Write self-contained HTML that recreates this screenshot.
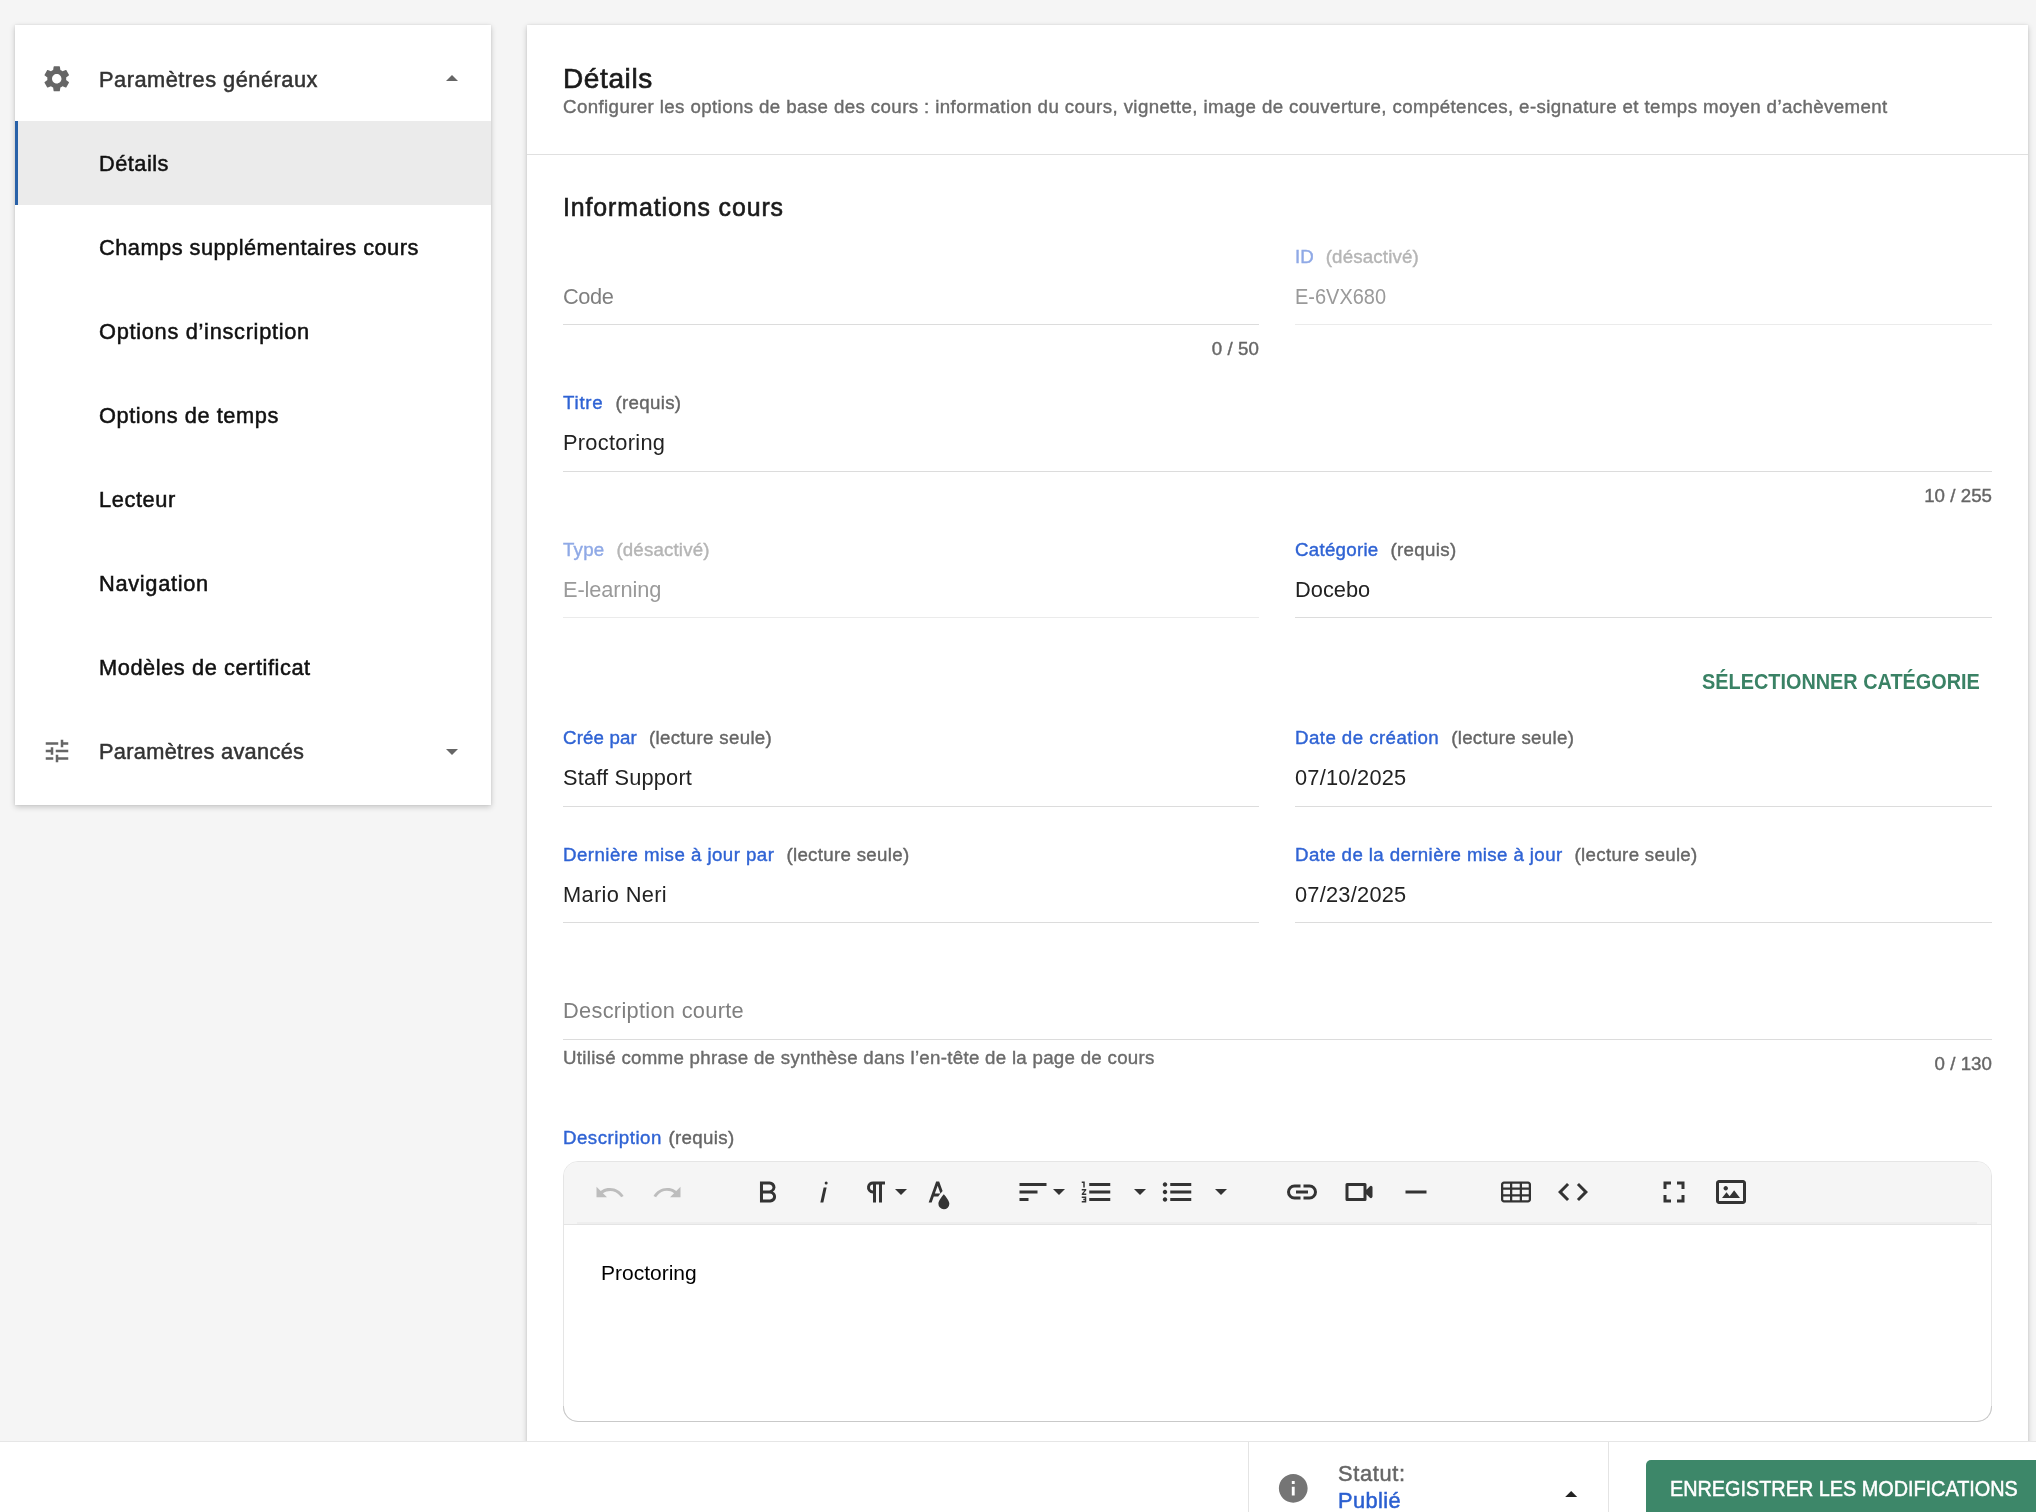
<!DOCTYPE html>
<html lang="fr">
<head>
<meta charset="utf-8">
<title>Détails</title>
<style>
:root{--ff:"Liberation Sans",sans-serif;}
*{box-sizing:border-box;margin:0;padding:0;}
html,body{width:2036px;height:1512px;overflow:hidden;background:#f5f5f5;}
body{position:relative;will-change:transform;font-family:var(--ff);color:#1a1a1a;-webkit-font-smoothing:antialiased;}
.abs{position:absolute;}
.t{position:absolute;white-space:pre;line-height:1;}
.sb{font-weight:600;}
/* sidebar */
#side{position:absolute;left:15px;top:25px;width:476px;height:780px;background:#fff;box-shadow:0 2px 6px rgba(0,0,0,.2),0 0 2px rgba(0,0,0,.08);}
#side .act{position:absolute;left:0;top:96px;width:476px;height:84px;background:#ebebeb;border-left:3px solid #2861a8;}
#side .it{position:absolute;left:84px;font-size:21px;font-weight:600;color:#111;white-space:pre;line-height:24px;}
#side .hd{color:#333;}
/* main */
#main{position:absolute;left:527px;top:25px;width:1501px;height:1500px;background:#fff;box-shadow:0 2px 6px rgba(0,0,0,.2),0 0 2px rgba(0,0,0,.08);}
.hr{position:absolute;height:1px;background:#dcdcdc;}
.lbl{font-size:18px;font-weight:600;color:#2f63d4;}
.lbl i{font-style:normal;color:#666;}
.lbl i.g{margin-left:12px;}
.lbl.dis{color:#8fa9e6;}
.lbl.dis i{color:#b5b5b5;}
.val{font-size:21px;color:#222;}
.ph{font-size:21px;color:#7f7f7f;}
.ph.d{color:#9a9a9a;}
.cnt{font-size:18px;font-weight:600;color:#666;}
#ed{position:absolute;left:36px;top:1136px;width:1429px;height:261px;border:1px solid #e5e5e5;border-radius:15px;background:#fff;}
#edb{position:absolute;left:-1px;bottom:-1px;width:1429px;height:16px;border:1px solid #c9c9c9;border-top:none;border-radius:0 0 15px 15px;}
#tb{position:absolute;left:0;top:0;width:100%;height:63px;background:#f5f5f5;border-bottom:1px solid #e4e4e4;border-radius:14px 14px 0 0;}
#tbl{position:absolute;left:13px;right:14px;top:60px;height:2px;background:#eeeeee;}
.hr.lt{background:#ebebeb;}
#title{font-size:27px;color:#1a1a1a;}
#sub{font-size:18px;color:#6b6b6b;}
#info{font-size:24px;color:#1a1a1a;}
#selcat{font-size:21px;font-weight:700;color:#3a8265;}
.f21{font-size:21px;}
/*PROXYOFF*/
#side .it{font-size:21.8px;font-weight:400;-webkit-text-stroke:.5px currentColor;}
.sb,.lbl,.cnt{font-weight:400;-webkit-text-stroke:.4px currentColor;}
#title{font-size:28px;-webkit-text-stroke:.65px currentColor;}
#sub{font-size:18.7px;}
#info{font-size:24.9px;-webkit-text-stroke:.6px currentColor;}
.lbl,.cnt{font-size:18.7px;}
.val,.ph,.f21,#selcat{font-size:21.8px;}
.f21{-webkit-text-stroke:.5px currentColor;}
#side .it span,#title span,#sub span,#info span,.lbl span,.lbl i,.cnt span{position:relative;top:1px;}
/*ENDPROXYOFF*/
/*FIT*/
#x1{letter-spacing:0.492px}
#x2{letter-spacing:0.469px}
#x3{letter-spacing:0.475px}
#x4{letter-spacing:0.696px}
#x5{letter-spacing:0.570px}
#x6{letter-spacing:0.580px}
#x7{letter-spacing:0.684px}
#x8{letter-spacing:0.563px}
#x9{letter-spacing:0.299px}
#x10{letter-spacing:0.614px}
#x11{letter-spacing:0.395px}
#x12{letter-spacing:0.899px}
#x13{letter-spacing:-0.398px}
#x14{letter-spacing:0.081px}
#x15{letter-spacing:0.000px}
#x16{letter-spacing:0.169px}
#x17{display:inline-block;transform:scaleX(0.9168);transform-origin:0 50%}
#x18{letter-spacing:0.753px}
#x19{letter-spacing:0.328px}
#x20{letter-spacing:0.286px}
#x21{letter-spacing:0.037px}
#x22{letter-spacing:0.219px}
#x23{letter-spacing:0.169px}
#x24{letter-spacing:-0.113px}
#x25{letter-spacing:0.271px}
#x26{letter-spacing:0.328px}
#x27{letter-spacing:0.010px}
#x28{display:inline-block;transform:scaleX(0.9111);transform-origin:100% 50%}
#x29{letter-spacing:0.162px}
#x30{letter-spacing:0.311px}
#x31{letter-spacing:0.169px}
#x32{letter-spacing:0.438px}
#x33{letter-spacing:0.311px}
#x34{letter-spacing:0.237px}
#x35{letter-spacing:0.456px}
#x36{letter-spacing:0.311px}
#x37{letter-spacing:0.348px}
#x38{letter-spacing:0.387px}
#x39{letter-spacing:0.311px}
#x40{letter-spacing:0.237px}
#x41{letter-spacing:0.297px}
#x42{letter-spacing:0.288px}
#x43{letter-spacing:0.056px}
#x44{letter-spacing:0.486px}
#x45{letter-spacing:0.328px}
#x47{letter-spacing:0.676px}
#x48{letter-spacing:0.424px}
#x49{display:inline-block;transform:scaleX(0.9097);transform-origin:0 50%}
/*ENDFIT*/
/* footer */
#foot{position:absolute;left:0;top:1441px;width:2036px;height:71px;background:#fff;border-top:1px solid #e6e6e6;}
</style>
</head>
<body>

<div id="side">
  <div class="act"></div>
  <svg class="abs" style="left:25.95px;top:38.25px" width="31.5" height="31.5" viewBox="0 0 24 24" fill="#666"><path d="M19.14,12.94c0.04-0.3,0.06-0.61,0.06-0.94c0-0.32-0.02-0.64-0.07-0.94l2.03-1.58c0.18-0.14,0.23-0.41,0.12-0.61l-1.92-3.32c-0.12-0.22-0.37-0.29-0.59-0.22l-2.39,0.96c-0.5-0.38-1.03-0.7-1.62-0.94L14.4,2.81c-0.04-0.24-0.24-0.41-0.48-0.41h-3.84c-0.24,0-0.43,0.17-0.47,0.41L9.25,5.35C8.66,5.59,8.12,5.92,7.63,6.29L5.24,5.33c-0.22-0.08-0.47,0-0.59,0.22L2.74,8.87C2.62,9.08,2.66,9.34,2.86,9.48l2.03,1.58C4.84,11.36,4.8,11.69,4.8,12s0.02,0.64,0.07,0.94l-2.03,1.58c-0.18,0.14-0.23,0.41-0.12,0.61l1.92,3.32c0.12,0.22,0.37,0.29,0.59,0.22l2.39-0.96c0.5,0.38,1.03,0.7,1.62,0.94l0.36,2.54c0.05,0.24,0.24,0.41,0.48,0.41h3.84c0.24,0,0.44-0.17,0.47-0.41l0.36-2.54c0.59-0.24,1.13-0.56,1.62-0.94l2.39,0.96c0.22,0.08,0.47,0,0.59-0.22l1.92-3.32c0.12-0.22,0.07-0.47-0.12-0.61L19.14,12.94z M12,15.6c-1.98,0-3.6-1.62-3.6-3.6s1.62-3.6,3.6-3.6s3.6,1.62,3.6,3.6S13.98,15.6,12,15.6z"/></svg>
  <svg class="abs" style="left:27px;top:711px" width="30" height="30" viewBox="0 0 24 24" fill="#666"><path d="M3 17v2h6v-2H3zM3 5v2h10V5H3zm10 16v-2h8v-2h-8v-2h-2v6h2zM7 9v2H3v2h4v2h2V9H7zm14 4v-2H11v2h10zm-6-4h2V7h4V5h-4V3h-2v6z"/></svg>
  <svg class="abs" style="left:431px;top:49.8px" width="12" height="6" viewBox="0 0 12 6" fill="#666"><path d="M0 6L6 0l6 6z"/></svg>
  <svg class="abs" style="left:431px;top:723.9px" width="12" height="6" viewBox="0 0 12 6" fill="#666"><path d="M0 0l6 6 6-6z"/></svg>
  <div class="it hd" style="top:42px"><span id="x1">Paramètres généraux</span></div>
  <div class="it" style="top:126px"><span id="x2">Détails</span></div>
  <div class="it" style="top:210px"><span id="x3">Champs supplémentaires cours</span></div>
  <div class="it" style="top:294px"><span id="x4">Options d’inscription</span></div>
  <div class="it" style="top:378px"><span id="x5">Options de temps</span></div>
  <div class="it" style="top:462px"><span id="x6">Lecteur</span></div>
  <div class="it" style="top:546px"><span id="x7">Navigation</span></div>
  <div class="it" style="top:630px"><span id="x8">Modèles de certificat</span></div>
  <div class="it hd" style="top:714px"><span id="x9">Paramètres avancés</span></div>
</div>

<div id="main">
  <div class="t sb" id="title" style="left:36px;top:39px;"><span id="x10">Détails</span></div>
  <div class="t sb" id="sub" style="left:36px;top:72px;"><span id="x11">Configurer les options de base des cours : information du cours, vignette, image de couverture, compétences, e-signature et temps moyen d’achèvement</span></div>
  <div class="hr" style="left:0;top:129px;width:1501px;height:1px;background:#e0e0e0;"></div>

  <div class="t sb" id="info" style="left:36px;top:169px;"><span id="x12">Informations cours</span></div>

  <!-- row 1 -->
  <div class="t ph" style="left:36px;top:261px;"><span id="x13">Code</span></div>
  <div class="hr" style="left:36px;top:299px;width:696px;"></div>
  <div class="t cnt r" style="right:769px;top:314px;"><span id="x14">0 / 50</span></div>

  <div class="t lbl dis" style="left:768px;top:222px;"><span id="x15">ID</span><i class="g" id="x16">(désactivé)</i></div>
  <div class="t ph d" style="left:768px;top:261px;"><span id="x17">E-6VX680</span></div>
  <div class="hr lt" style="left:768px;top:299px;width:697px;"></div>

  <!-- row 2 -->
  <div class="t lbl" style="left:36px;top:368px;"><span id="x18">Titre</span><i class="g" id="x19">(requis)</i></div>
  <div class="t val" style="left:36px;top:407px;"><span id="x20">Proctoring</span></div>
  <div class="hr" style="left:36px;top:446px;width:1429px;"></div>
  <div class="t cnt r" style="right:36px;top:461px;"><span id="x21">10 / 255</span></div>

  <!-- row 3 -->
  <div class="t lbl dis" style="left:36px;top:515px;"><span id="x22">Type</span><i class="g" id="x23">(désactivé)</i></div>
  <div class="t ph d" style="left:36px;top:554px;"><span id="x24">E-learning</span></div>
  <div class="hr lt" style="left:36px;top:592px;width:696px;"></div>

  <div class="t lbl" style="left:768px;top:515px;"><span id="x25">Catégorie</span><i class="g" id="x26">(requis)</i></div>
  <div class="t val" style="left:768px;top:554px;"><span id="x27">Docebo</span></div>
  <div class="hr" style="left:768px;top:592px;width:697px;"></div>

  <div class="t" id="selcat" style="right:48px;top:646px;"><span id="x28">SÉLECTIONNER CATÉGORIE</span></div>

  <!-- row 4 -->
  <div class="t lbl" style="left:36px;top:703px;"><span id="x29">Crée par</span><i class="g" id="x30">(lecture seule)</i></div>
  <div class="t val" style="left:36px;top:742px;"><span id="x31">Staff Support</span></div>
  <div class="hr" style="left:36px;top:781px;width:696px;"></div>

  <div class="t lbl" style="left:768px;top:703px;"><span id="x32">Date de création</span><i class="g" id="x33">(lecture seule)</i></div>
  <div class="t val" style="left:768px;top:742px;"><span id="x34">07/10/2025</span></div>
  <div class="hr" style="left:768px;top:781px;width:697px;"></div>

  <!-- row 5 -->
  <div class="t lbl" style="left:36px;top:820px;"><span id="x35">Dernière mise à jour par</span><i class="g" id="x36">(lecture seule)</i></div>
  <div class="t val" style="left:36px;top:859px;"><span id="x37">Mario Neri</span></div>
  <div class="hr" style="left:36px;top:897px;width:696px;"></div>

  <div class="t lbl" style="left:768px;top:820px;"><span id="x38">Date de la dernière mise à jour</span><i class="g" id="x39">(lecture seule)</i></div>
  <div class="t val" style="left:768px;top:859px;"><span id="x40">07/23/2025</span></div>
  <div class="hr" style="left:768px;top:897px;width:697px;"></div>

  <!-- short description -->
  <div class="t ph" style="left:36px;top:975px;"><span id="x41">Description courte</span></div>
  <div class="hr" style="left:36px;top:1014px;width:1429px;"></div>
  <div class="t cnt" style="left:36px;top:1023px;color:#6b6b6b;"><span id="x42">Utilisé comme phrase de synthèse dans l’en-tête de la page de cours</span></div>
  <div class="t cnt r" style="right:36px;top:1029px;"><span id="x43">0 / 130</span></div>

  <!-- description -->
  <div class="t lbl" style="left:36px;top:1103px;"><span id="x44">Description </span><i id="x45" style="margin-left:1px">(requis)</i></div>
  <div id="ed">
    <div id="edb"></div>
    <div id="tb"><div id="tbl"></div>
      <svg class="abs" style="left:27.5px;top:12px" width="36" height="36" viewBox="0 0 24 24" fill="#bdbdbd"><path d="M10.4,9.4c-1.7,0.3-3.2,0.9-4.6,2L3,8.5v7h7l-2.7-2.7c3.7-2.6,8.8-1.8,11.5,1.900c0.2,0.3,0.4,0.5,0.5,0.8l1.8-0.9C18.9,10.8,14.7,8.7,10.4,9.4z"/></svg>
      <svg class="abs" style="left:85.2px;top:12px" width="36" height="36" viewBox="0 0 24 24" fill="#bdbdbd"><path d="M13.6,9.4c1.7,0.3,3.2,0.9,4.6,2L21,8.5v7h-7l2.7-2.7C13,10.1,7.9,11,5.3,14.7c-0.2,0.3-0.4,0.5-0.5,0.8L3,14.6C5.1,10.8,9.3,8.7,13.6,9.4z"/></svg>
      <svg class="abs" style="left:185.5px;top:12px" width="36" height="36" viewBox="0 0 24 24" fill="#333"><path d="M15.25,11.8h0A3.68,3.68,0,0,0,17,9a3.930,3.930,0,0,0-3.860-4H6.65V19h7a3.740,3.740,0,0,0,3.700-3.780V15.1A3.640,3.640,0,0,0,15.25,11.8ZM8.65,7h4.2a2.090,2.090,0,0,1,2,1.300,2.090,2.090,0,0,1-1.370,2.610,2.230,2.230,0,0,1-.63.09H8.65Zm4.6,10H8.65V13h4.6a2.090,2.090,0,0,1,2,1.300,2.090,2.090,0,0,1-1.370,2.610A2.230,2.230,0,0,1,13.25,17Z"/></svg>
      <svg class="abs" style="left:242.3px;top:12px" width="36" height="36" viewBox="0 0 24 24" fill="#333"><path d="M11.76,9h2l-2.2,10h-2Zm1.680-4a1,1,0,1,0,1,1,1,1,0,0,0-1-1Z"/></svg>
      <svg class="abs" style="left:293.6px;top:12px" width="36" height="36" viewBox="0 0 24 24" fill="#333"><path d="M10.15,5A4.110,4.110,0,0,0,6.080,8.180,4,4,0,0,0,10,13v6h2V7h2V19h2V7h2V5ZM8,9a2,2,0,0,1,2-2v4A2,2,0,0,1,8,9Z"/></svg>
      <svg class="abs" style="left:357.0px;top:12px" width="36" height="36" viewBox="0 0 24 24" fill="#333"><path d="M15.2,13.494s-3.600,3.900-3.600,6.300a3.650,3.650,0,0,0,7.300.1v-.1C18.9,17.394,15.2,13.494,15.2,13.494Zm-1.470-1.357.669-.724L12.1,5h-2l-5,14h2l1.430-4h2.943A24.426,24.426,0,0,1,13.726,12.137ZM11.1,7.8l1.860,5.200H9.244Z"/></svg>
      <svg class="abs" style="left:450.7px;top:12px" width="36" height="36" viewBox="0 0 24 24" fill="#333"><path d="M3,18h6v-2H3V18z M3,11v2h12v-2H3z M3,6v2h18V6H3z"/></svg>
      <svg class="abs" style="left:513.8px;top:12px" width="36" height="36" viewBox="0 0 24 24" fill="#333"><path d="M2.5,16h2v.5h-1v1h1V18h-2v1h3V15h-3Zm1-7h1V5h-2V6h1Zm-1,2H4.3L2.5,13.1V14h3V13H3.7l1.800-2.100V10h-3Zm5-5V8h14V6Zm0,12h14V16H7.5Zm0-5h14V11H7.5Z"/></svg>
      <svg class="abs" style="left:594.6px;top:12px" width="36" height="36" viewBox="0 0 24 24" fill="#333"><path d="M4,10.5c-0.8,0-1.5,0.7-1.5,1.500s0.7,1.500,1.500,1.500s1.500-0.7,1.500-1.500S4.8,10.5,4,10.5z M4,5.5C3.2,5.5,2.5,6.2,2.5,7S3.2,8.5,4,8.5S5.5,7.8,5.5,7S4.8,5.5,4,5.500z M4,15.5c-0.8,0-1.5,0.7-1.5,1.500s0.7,1.500,1.500,1.500s1.500-0.7,1.500-1.500S4.8,15.5,4,15.5z M7.5,6v2h14V6H7.5z M7.5,18h14v-2h-14V18z M7.5,13h14v-2h-14V13z"/></svg>
      <svg class="abs" style="left:720.0px;top:12px" width="36" height="36" viewBox="0 0 24 24" fill="#333"><path d="M11,17H7A5,5,0,0,1,7,7h4V9H7a3,3,0,0,0,0,6h4ZM17,7H13V9h4a3,3,0,0,1,0,6H13v2h4A5,5,0,0,0,17,7Zm-1,4H8v2h8Z"/></svg>
      <svg class="abs" style="left:777.0px;top:12px" width="36" height="36" viewBox="0 0 24 24" fill="#333"><path d="M15,8v8H5V8H15m2,2.500V7a1,1,0,0,0-1-1H4A1,1,0,0,0,3,7V17a1,1,0,0,0,1,1H16a1,1,0,0,0,1-1V13.5l2.290,2.290A1,1,0,0,0,21,15.080V8.910a1,1,0,0,0-1.710-.71Z"/></svg>
      <svg class="abs" style="left:834.0px;top:12px" width="36" height="36" viewBox="0 0 24 24" fill="#333"><path d="M19,11H5v2h14V11z"/></svg>
      <svg class="abs" style="left:933.8px;top:12px" width="36" height="36" viewBox="0 0 24 24" fill="#333"><path d="M20,5H4C2.9,5,2,5.900,2,7v2v1.500v3V15v2c0,1.100,0.900,2,2,2h16c1.100,0,2-0.900,2-2v-2v-1.500v-3V9V7C22,5.900,21.100,5,20,5z M9.5,13.500v-3h5v3H9.5z M14.5,15v2.500h-5V15H14.5z M9.5,9V6.500h5V9H9.5z M3.5,7c0-0.300,0.200-0.500,0.500-0.500h4V9H3.5V7z M3.5,10.500H8v3H3.5V10.500z M3.5,17v-2H8v2.500H4C3.700,17.500,3.500,17.300,3.500,17z M20.5,17c0,0.300-0.200,0.500-0.500,0.500h-4V15h4.500V17z M20.5,13.500H16v-3h4.500V13.500z M16,9V6.500h4c0.300,0,0.500,0.200,0.500,0.500v2H16z"/></svg>
      <svg class="abs" style="left:991.0px;top:12px" width="36" height="36" viewBox="0 0 24 24" fill="#333"><path d="M9.4,16.6,4.8,12,9.4,7.4,8,6,2,12l6,6Zm5.200,0L19.2,12,14.6,7.400,16,6l6,6-6,6Z"/></svg>
      <svg class="abs" style="left:1091.9px;top:12px" width="36" height="36" viewBox="0 0 24 24" fill="#333"><path d="M7,14H5v5h5V17H7ZM5,10H7V7h3V5H5Zm12,7H14v2h5V14H17ZM14,5V7h3v3h2V5Z"/></svg>
      <svg class="abs" style="left:1148.9px;top:12px" width="36" height="36" viewBox="0 0 24 24" fill="#333"><path d="M14.2,11l3.800,5H6l3-3.900l2.100,2.700L14,11H14.2z M8.5,11c0.800,0,1.500-0.700,1.500-1.500S9.3,8,8.5,8S7,8.700,7,9.500C7,10.300,7.700,11,8.500,11z M22,6v12c0,1.100-0.900,2-2,2H4c-1.100,0-2-0.900-2-2V6c0-1.100,0.900-2,2-2h16C21.100,4,22,4.900,22,6z M20,8.800V6H4v12h16V8.800z"/></svg>
      <svg class="abs" style="left:331.0px;top:27.2px" width="12" height="6" viewBox="0 0 12 6" fill="#333"><path d="M0 0l6 6 6-6z"/></svg>
      <svg class="abs" style="left:489.0px;top:27.2px" width="12" height="6" viewBox="0 0 12 6" fill="#333"><path d="M0 0l6 6 6-6z"/></svg>
      <svg class="abs" style="left:570.0px;top:27.2px" width="12" height="6" viewBox="0 0 12 6" fill="#333"><path d="M0 0l6 6 6-6z"/></svg>
      <svg class="abs" style="left:651.0px;top:27.2px" width="12" height="6" viewBox="0 0 12 6" fill="#333"><path d="M0 0l6 6 6-6z"/></svg>
    </div>
    <div class="t" style="left:37px;top:100px;font-size:21px;color:#000;font-family:'Liberation Sans',sans-serif;"><span id="x46">Proctoring</span></div>
  </div>
</div>

<div id="foot">
  <div class="abs" style="left:1248px;top:0;width:361px;height:71px;border-left:1px solid #e4e4e4;border-right:1px solid #e4e4e4;"></div>
  <svg class="abs" style="left:1276.2px;top:28.7px" width="34.5" height="34.5" viewBox="0 0 24 24" fill="#757575"><path d="M12 2C6.48 2 2 6.48 2 12s4.480 10 10 10 10-4.480 10-10S17.520 2 12 2zm1 15h-2v-6h2v6zm0-8h-2V7h2v2z"/></svg>
  <div class="t sb f21" style="left:1338px;top:21px;color:#666;"><span id="x47">Statut:</span></div>
  <div class="t sb f21" style="left:1338px;top:48px;color:#2a5fd0;"><span id="x48">Publié</span></div>
  <svg class="abs" style="left:1565.3px;top:49.2px" width="12.4" height="6.2" viewBox="0 0 12 6" fill="#222"><path d="M0 6L6 0l6 6z"/></svg>
  <div class="abs" id="btn" style="left:1646px;top:18px;width:420px;height:80px;background:#3d8769;border-radius:5px;"></div>
  <div class="t sb f21" style="left:1670px;top:36px;color:#fff;"><span id="x49">ENREGISTRER LES MODIFICATIONS</span></div>
</div>

</body>
</html>
